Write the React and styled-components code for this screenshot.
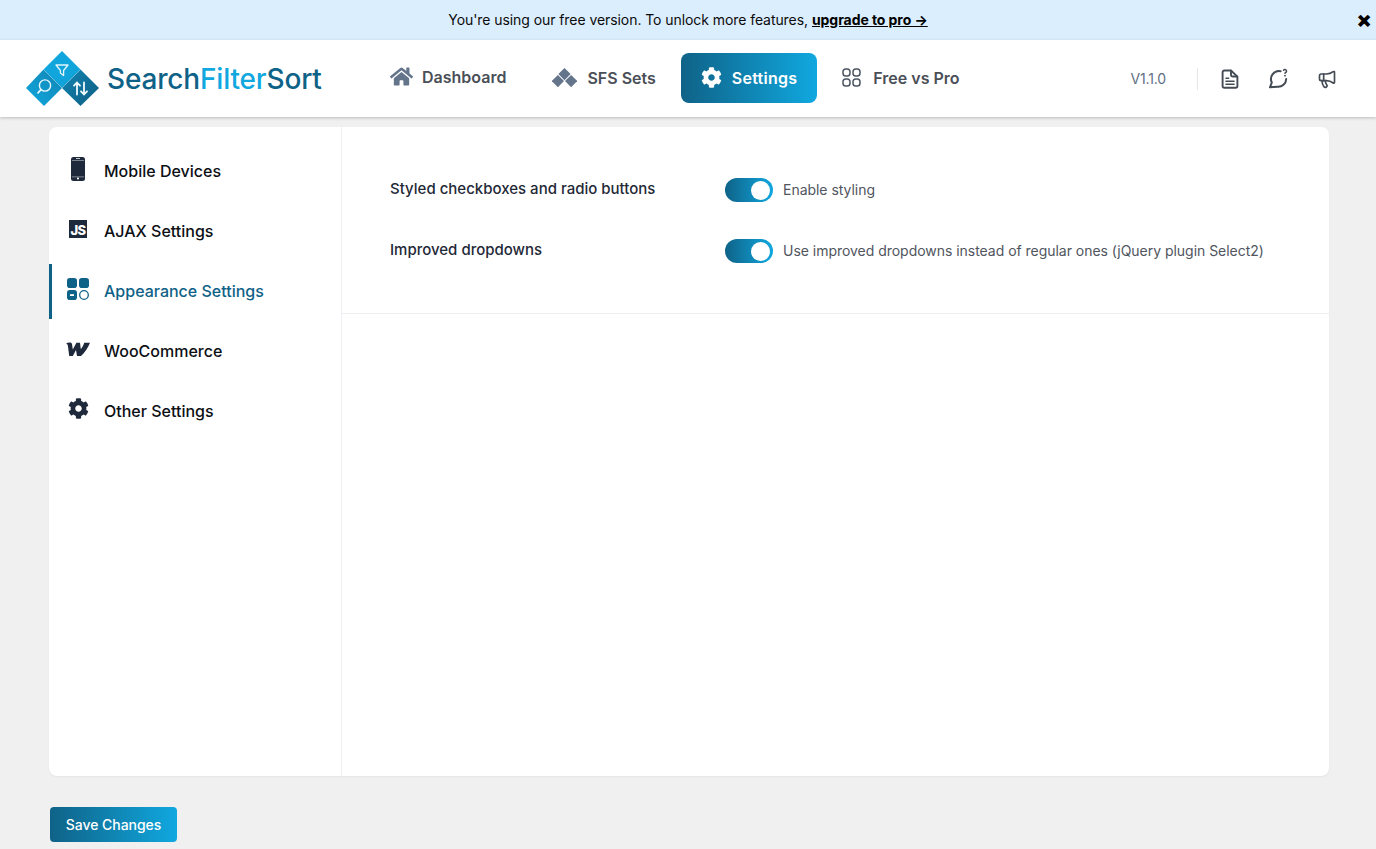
import React from 'react';
import styled, { createGlobalStyle } from 'styled-components';
import { FaHome, FaCog } from 'react-icons/fa';
import { Megaphone } from 'lucide-react';

const Global = createGlobalStyle`
  html, body { margin: 0; padding: 0; height: 100%; background: #f0f0f0; overflow: hidden; }
  body { font-family: Inter, "Noto Sans", sans-serif; }
`;
const gradient = 'linear-gradient(90deg, #0f6287 0%, #10a8df 100%)';

const Page = styled.div`width: 1376px; height: 849px; display: flex; flex-direction: column; overflow: hidden;`;
const Banner = styled.div`
  height: 40px; flex: none; box-sizing: border-box; padding-bottom: 2px; background: #dbeefe; position: relative;
  display: flex; align-items: center; justify-content: center;
  font-size: 14px; color: #0b0b0b; letter-spacing: -0.07px;
`;
const BannerLink = styled.a`font-weight: 700; color: #000; text-decoration: underline; margin-left: 4px;`;
const Close = styled.span`
  position: absolute; right: 6px; top: 8px; font-size: 22px; font-weight: 900; color: #000;
  line-height: 22px; width: 12px; display: flex; justify-content: center;
`;
const Header = styled.header`
  height: 77px; flex: none; background: #fff; display: flex; align-items: center;
  padding-left: 26px; box-shadow: 0 1px 3px rgba(0,0,0,.22); position: relative; z-index: 1;
`;
const Logo = styled.div`display: flex; align-items: center; gap: 8px; width: 344px; flex: none;`;
const LogoText = styled.div`font-size: 28px; font-weight: 500; color: #0f6287; letter-spacing: -0.17px; line-height: 1;`;
const LogoAccent = styled.span`color: #10a8df;`;
const Nav = styled.nav`display: flex; align-items: center; gap: 5px; padding-bottom: 2px;`;
const NavItem = styled.a`
  height: 50px; box-sizing: border-box; padding: 0 ${p => p.$right || 20}px ${p => p.$lift || 0}px 20px;
  display: flex; align-items: center; gap: ${p => p.$gap || 10}px;
  border-radius: 8px; font-size: 16px; font-weight: 600; white-space: nowrap;
  letter-spacing: ${p => (p.$active ? '0.25px' : '0')};
  color: ${p => (p.$active ? '#fff' : '#4a4f57')};
  background: ${p => (p.$active ? gradient : 'transparent')};
  svg { color: ${p => (p.$active ? '#fff' : '#64748b')}; flex: none; }
`;
const Right = styled.div`margin-left: auto; display: flex; align-items: center; padding-right: 39px;`;
const Version = styled.span`font-size: 14px; color: #5f6f85; margin-right: 31px; letter-spacing: -0.15px;`;
const Divider = styled.span`width: 1px; height: 22px; background: #e5e7eb; margin-right: 22px;`;
const Tools = styled.div`display: flex; align-items: center; gap: 28px; color: #444b55;`;

const Main = styled.main`flex: 1; min-height: 0; padding: 10px 47px 0 49px; display: flex; flex-direction: column;`;
const Card = styled.div`
  height: 649px; flex: none; display: flex; background: #fff; border-radius: 8px;
  box-shadow: 0 1px 2px rgba(0,0,0,.05);
`;
const Side = styled.aside`
  width: 293px; flex: none; box-sizing: border-box; border-right: 1px solid #eef0f4;
  padding-top: 17px; display: flex; flex-direction: column; gap: 5px;
`;
const SideItem = styled.a`
  height: 55px; box-sizing: border-box; display: flex; align-items: center; gap: 14px; padding: 0 0 2px 14px;
  border-left: 3px solid ${p => (p.$active ? '#0f6287' : 'transparent')};
  font-size: 16px; font-weight: 500;
  color: ${p => (p.$active ? '#0f6287' : '#0c0f14')};
`;
const SideIcon = styled.span`
  width: 24px; height: 24px; flex: none; display: flex; align-items: center; justify-content: center;
  color: ${p => (p.$active ? '#0f6287' : '#1e293b')}; position: relative; top: -2px;
`;
const JsBadge = styled.span`
  width: 18px; height: 18px; background: #1e293b; color: #fff; font-size: 13px; font-weight: 800;
  display: flex; align-items: flex-end; justify-content: center; line-height: 16px; letter-spacing: -0.5px;
`;
const Content = styled.section`flex: 1; display: flex; flex-direction: column;`;
const Options = styled.div`
  height: 187px; box-sizing: border-box; border-bottom: 1px solid #eceef1; padding: 48px 48px 0;
  display: flex; flex-direction: column; gap: 31px;
`;
const Row = styled.div`display: flex; align-items: center; height: 30px;`;
const Label = styled.div`width: 335px; flex: none; font-size: 15px; font-weight: 500; color: #1f2937; position: relative; top: -2px;`;
const Toggle = styled.span`
  width: 48px; height: 24px; border-radius: 12px; background: ${gradient}; flex: none;
  display: flex; align-items: center; justify-content: flex-end; padding-right: 3px; box-sizing: border-box; margin-right: 10px;
`;
const Knob = styled.span`width: 19px; height: 19px; border-radius: 50%; background: #fff;`;
const Hint = styled.div`font-size: 14px; color: #50555e; letter-spacing: -0.03px; position: relative; top: -1px;`;
const Footer = styled.div`padding-top: 31px; padding-left: 1px;`;
const Save = styled.button`
  width: 127px; height: 35px; border: 0; border-radius: 4px; background: ${gradient};
  color: #fff; font: 500 14px Inter, sans-serif; padding: 0; letter-spacing: -0.03px;
`;

const LogoMark = () => (
  <svg width="73" height="56" viewBox="0 0 73 56" fill="none">
    <defs>
      <linearGradient id="lg1" x1="0" y1="1" x2="1" y2="0"><stop offset="0" stopColor="#10a8df" /><stop offset="1" stopColor="#1184b2" /></linearGradient>
      <linearGradient id="lg2" x1="0" y1="0" x2="1" y2="1"><stop offset="0" stopColor="#10a8df" /><stop offset="1" stopColor="#10a2d8" /></linearGradient>
      <linearGradient id="lg3" x1="0" y1="0" x2="1" y2="1"><stop offset="0" stopColor="#1185b3" /><stop offset="1" stopColor="#0f5d82" /></linearGradient>
    </defs>
    <path d="M36 0 L54.5 18.5 L36 37 L17.5 18.5 Z" fill="url(#lg2)" />
    <path d="M17.5 18.5 L36 37 L18 55 L0 37 Z" fill="url(#lg1)" />
    <path d="M54.5 18.5 L73 37 L54.5 55 L36 37 Z" fill="url(#lg3)" />
    <path d="M17.5 18.5 L36 37 L54.5 18.5" stroke="#ffffff" strokeOpacity=".3" strokeWidth=".6" />
    <path d="M30 14 H42 L37.6 19.5 V24.5 L34.4 22 V19.5 Z" stroke="#dff4fc" strokeWidth="1.3" strokeLinejoin="round" />
    <circle cx="19" cy="34.5" r="5.6" stroke="#e8f7fd" strokeWidth="1.4" />
    <path d="M15 38.6 L12 41.8" stroke="#e8f7fd" strokeWidth="1.8" strokeLinecap="round" />
    <path d="M51 43.5 V31.5 M48 34.7 L51 31.5 L54 34.7 M58 31.5 V43.5 M55 40.3 L58 43.5 L61 40.3" stroke="#f1fbff" strokeWidth="1.8" strokeLinecap="round" strokeLinejoin="round" />
  </svg>
);
const SetsIcon = () => (
  <svg width="25" height="20" viewBox="0 0 25 20" fill="currentColor">
    <path d="M12.5 0 L18.6 6.1 L12.5 12.2 L6.4 6.1 Z" />
    <path d="M5.9 6.9 L12 13 L5.9 19.2 L-0.2 13 Z" />
    <path d="M19.1 6.9 L25.2 13 L19.1 19.2 L13 13 Z" />
  </svg>
);
const GridIcon = () => (
  <svg width="19" height="19" viewBox="0 0 19 19" fill="none" stroke="#4b5563" strokeWidth="1.5">
    <rect x="1" y="1" width="7" height="7" rx="2.8" />
    <rect x="11" y="1" width="7" height="7" rx="2.8" />
    <rect x="1" y="11" width="7" height="7" rx="2.8" />
    <rect x="11" y="11" width="7" height="7" rx="2.8" />
  </svg>
);
const DocIcon = () => (
  <svg width="20" height="20" viewBox="0 0 20 20" fill="none" stroke="currentColor" strokeWidth="1.9" strokeLinecap="round" strokeLinejoin="round">
    <path d="M4.4 1.5 H11 L17.4 7.6 V17 A1.8 1.8 0 0 1 15.6 18.8 H4.4 A1.8 1.8 0 0 1 2.6 17 V3.3 A1.8 1.8 0 0 1 4.4 1.5 Z" />
    <path d="M11 1.8 V6 A1.5 1.5 0 0 0 12.5 7.5 H17" />
    <path d="M6 9.2 H8.6 M6 12.2 H14 M6 15.2 H14" strokeWidth="1.6" />
  </svg>
);
const ChatHelp = () => (
  <svg width="21" height="21" viewBox="0 0 21 21" fill="none" stroke="currentColor" strokeWidth="2" strokeLinecap="round" strokeLinejoin="round">
    <path d="M12.6 3.2 A8 8 0 0 0 3.8 14.5 L2 19.3 L9.4 18.8 A8 8 0 0 0 18.2 11" />
    <path d="M15.6 2.2 A1.6 1.6 0 1 1 17.5 4.6 L17 5.2" strokeWidth="1.5" />
    <path d="M17 7.6 V7.7" strokeWidth="1.8" />
  </svg>
);
const PhoneIcon = () => (
  <svg width="14" height="24" viewBox="0 0 14 24" fill="currentColor">
    <path fillRule="evenodd" d="M2.5 0 H11.5 A2.5 2.5 0 0 1 14 2.5 V21.5 A2.5 2.5 0 0 1 11.5 24 H2.5 A2.5 2.5 0 0 1 0 21.5 V2.5 A2.5 2.5 0 0 1 2.5 0 Z M5 1.2 V2 H9 V1.2 Z M5.9 21.5 a1.1 1.1 0 1 0 2.2 0 a1.1 1.1 0 1 0 -2.2 0 Z" />
    <rect x="0.9" y="3" width="12.2" height="0.6" fill="#fff" opacity=".7" />
    <rect x="0.9" y="19.6" width="12.2" height="0.6" fill="#fff" opacity=".7" />
  </svg>
);
const AppearanceIcon = () => (
  <svg width="22" height="22" viewBox="0 0 22 22" fill="currentColor">
    <rect x="0" y="0" width="10" height="10" rx="2.8" />
    <rect x="12" y="0" width="10" height="10" rx="2.8" />
    <rect x="0" y="12" width="10" height="10" rx="2.8" />
    <rect x="3" y="16.2" width="4" height="1.8" fill="#fff" />
    <circle cx="17" cy="17" r="4.3" fill="none" stroke="currentColor" strokeWidth="1.3" />
  </svg>
);
const WooIcon = () => (
  <svg width="24" height="14" viewBox="0 0 24 14" fill="currentColor">
    <path d="M0 1.6 C2 .2 5.4 .1 6 2 L6.8 7.4 L10.4 .8 H14 L14.8 7.2 C16.2 5.4 17.6 3.4 18.2 .8 H24 C22 5.6 18.8 10.8 15 14 H11 L10 8 L6.8 14 H3.2 L1.9 3.8 C1.7 2.6 1 2 0 1.6 Z" />
  </svg>
);

const items = [
  { label: 'Mobile Devices', icon: <PhoneIcon /> },
  { label: 'AJAX Settings', icon: <JsBadge>JS</JsBadge> },
  { label: 'Appearance Settings', icon: <AppearanceIcon />, active: true },
  { label: 'WooCommerce', icon: <WooIcon /> },
  { label: 'Other Settings', icon: <FaCog size={21} /> },
];

export default function App() {
  return (
    <Page>
      <Global />
      <Banner>
        You're using our free version. To unlock more features,
        <BannerLink>upgrade to pro →</BannerLink>
        <Close>×</Close>
      </Banner>
      <Header>
        <Logo>
          <LogoMark />
          <LogoText>Search<LogoAccent>Filter</LogoAccent>Sort</LogoText>
        </Logo>
        <Nav>
          <NavItem $gap={9} $lift={2} $right={21}><FaHome size={23} />Dashboard</NavItem>
          <NavItem><SetsIcon />SFS Sets</NavItem>
          <NavItem $active><FaCog size={21} />Settings</NavItem>
          <NavItem $gap={12}><GridIcon />Free vs Pro</NavItem>
        </Nav>
        <Right>
          <Version>V1.1.0</Version>
          <Divider />
          <Tools>
            <DocIcon />
            <ChatHelp />
            <Megaphone size={20} strokeWidth={2} />
          </Tools>
        </Right>
      </Header>
      <Main>
        <Card>
          <Side>
            {items.map(i => (
              <SideItem key={i.label} $active={i.active}>
                <SideIcon $active={i.active}>{i.icon}</SideIcon>
                {i.label}
              </SideItem>
            ))}
          </Side>
          <Content>
            <Options>
              <Row><Label>Styled checkboxes and radio buttons</Label><Toggle><Knob /></Toggle><Hint>Enable styling</Hint></Row>
              <Row><Label>Improved dropdowns</Label><Toggle><Knob /></Toggle><Hint>Use improved dropdowns instead of regular ones (jQuery plugin Select2)</Hint></Row>
            </Options>
          </Content>
        </Card>
        <Footer><Save>Save Changes</Save></Footer>
      </Main>
    </Page>
  );
}
